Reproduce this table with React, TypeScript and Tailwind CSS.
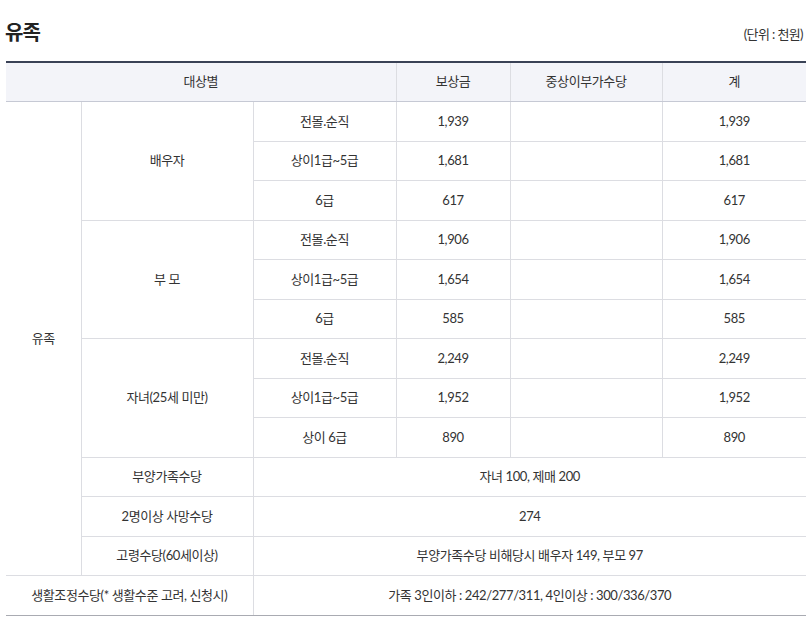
import React from "react";

type SubRow = { label: string; comp: string; total: string };

const groups: { name: string; rows: SubRow[] }[] = [
  {
    name: "배우자",
    rows: [
      { label: "전몰.순직", comp: "1,939", total: "1,939" },
      { label: "상이1급~5급", comp: "1,681", total: "1,681" },
      { label: "6급", comp: "617", total: "617" },
    ],
  },
  {
    name: "부 모",
    rows: [
      { label: "전몰.순직", comp: "1,906", total: "1,906" },
      { label: "상이1급~5급", comp: "1,654", total: "1,654" },
      { label: "6급", comp: "585", total: "585" },
    ],
  },
  {
    name: "자녀(25세 미만)",
    rows: [
      { label: "전몰.순직", comp: "2,249", total: "2,249" },
      { label: "상이1급~5급", comp: "1,952", total: "1,952" },
      { label: "상이 6급", comp: "890", total: "890" },
    ],
  },
];

const extras = [
  { label: "부양가족수당", value: "자녀 100, 제매 200" },
  { label: "2명이상 사망수당", value: "274" },
  { label: "고령수당(60세이상)", value: "부양가족수당 비해당시 배우자 149, 부모 97" },
];

const td = "border border-[#dcdde2] h-[39.5px] p-0 text-center align-middle";

export default function App() {
  return (
    <div className="w-[811px] bg-white text-[#333] font-['Lato','Noto_Sans_CJK_KR',sans-serif] text-[13px] tracking-[-0.4px]">
      <div className="flex items-end justify-between pl-[5px] pr-[8px] pt-[19px]">
        <h2 className="text-[20px] font-bold leading-[26px] text-[#222] tracking-[-1px]">유족</h2>
        <span className="text-[13px] leading-[20px] text-[#333] tracking-[-0.6px] mb-[1px]">(단위 : 천원)</span>
      </div>
      <div className="pl-[6px] pt-[16px]">
        <table className="w-[800px] border-collapse table-fixed border-t-2 border-t-[#3a4256]">
          <colgroup>
            <col className="w-[75px]" />
            <col className="w-[172px]" />
            <col className="w-[143px]" />
            <col className="w-[114px]" />
            <col className="w-[152px]" />
            <col className="w-[144px]" />
          </colgroup>
          <thead>
            <tr className="bg-[#f3f4f9]">
              <th colSpan={3} className={`${td} border-l-0 border-t-0 border-b-[#c6c9d4] font-normal h-[38px]`}>대상별</th>
              <th className={`${td} border-t-0 border-b-[#c6c9d4] font-normal h-[38px]`}>보상금</th>
              <th className={`${td} border-t-0 border-b-[#c6c9d4] font-normal h-[38px]`}>중상이부가수당</th>
              <th className={`${td} border-r-0 border-t-0 border-b-[#c6c9d4] font-normal h-[38px]`}>계</th>
            </tr>
          </thead>
          <tbody>
            {groups.map((g, gi) =>
              g.rows.map((r, ri) => (
                <tr key={`${gi}-${ri}`}>
                  {gi === 0 && ri === 0 && (
                    <td rowSpan={12} className={`${td} border-l-0`}>유족</td>
                  )}
                  {ri === 0 && (
                    <td rowSpan={3} className={td}>{g.name}</td>
                  )}
                  <td className={td}>{r.label}</td>
                  <td className={td}>{r.comp}</td>
                  <td className={td}></td>
                  <td className={`${td} border-r-0`}>{r.total}</td>
                </tr>
              ))
            )}
            {extras.map((e) => (
              <tr key={e.label}>
                <td className={td}>{e.label}</td>
                <td colSpan={4} className={`${td} border-r-0`}>{e.value}</td>
              </tr>
            ))}
            <tr>
              <td colSpan={2} className={`${td} border-l-0 border-b-[#a9abb2]`}>생활조정수당(* 생활수준 고려, 신청시)</td>
              <td colSpan={4} className={`${td} border-r-0 border-b-[#a9abb2]`}>가족 3인이하 : 242/277/311, 4인이상 : 300/336/370</td>
            </tr>
          </tbody>
        </table>
      </div>
    </div>
  );
}
